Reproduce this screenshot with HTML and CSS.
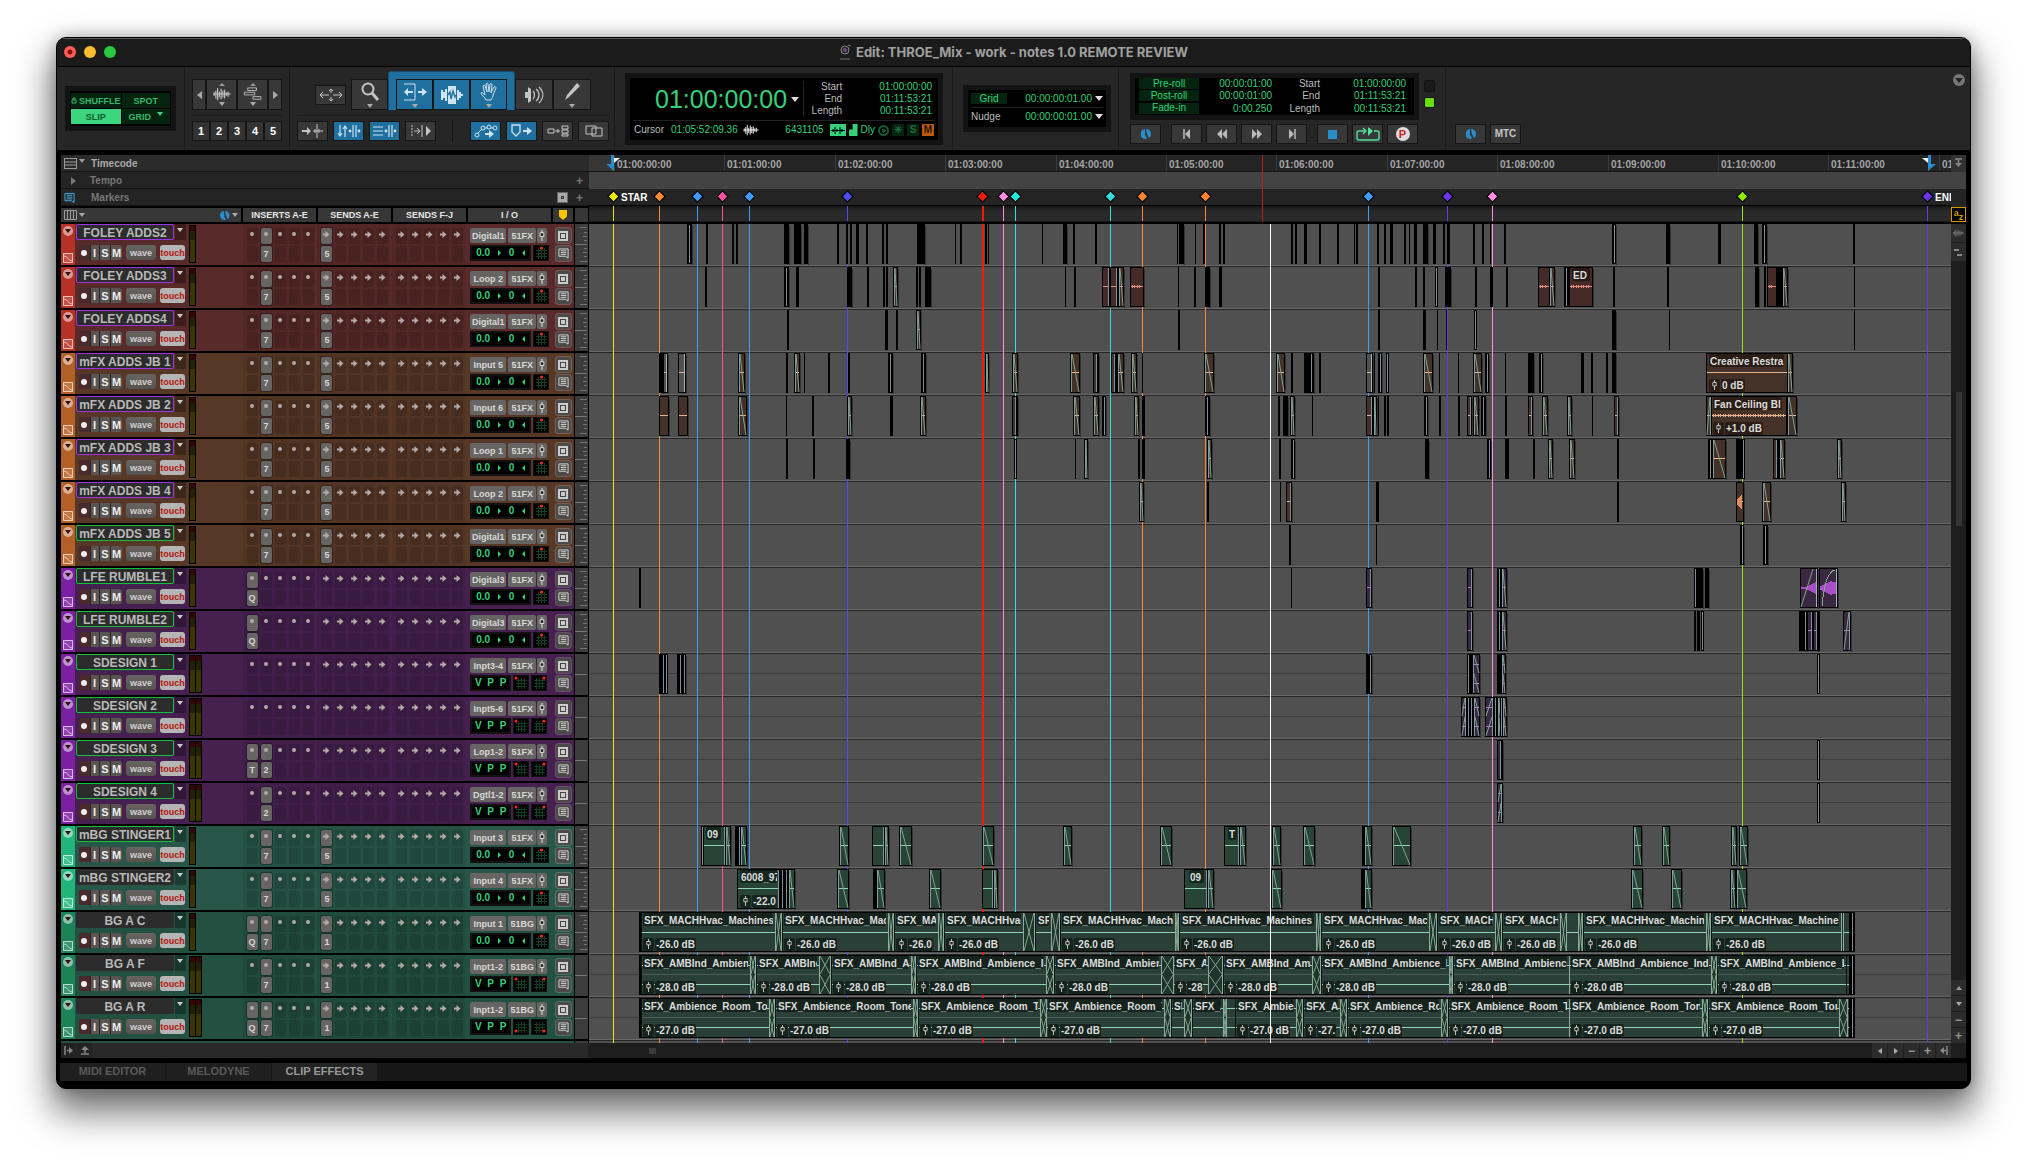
FILE: index.html
```html
<!DOCTYPE html>
<html lang="en">
<head>
<meta charset="utf-8">
<title>Edit: THROE_Mix - work - notes 1.0 REMOTE REVIEW</title>
<link rel="stylesheet" href="styles.css">
</head>
<body>
<svg class="defs" aria-hidden="true">
  <symbol id="wave" viewBox="0 0 20 16"><path d="M0 8h20M1 6v4M3 4v9M5 1v14M7 5v7M9 2v12M11 4v8M13 3v10M15 6v4M17 5v6" stroke="currentColor" stroke-width="1.3" fill="none"/></symbol>
  <symbol id="bars" viewBox="0 0 20 16"><path d="M4 1h10v3H4zM0 6h12v3H0zM10 11h9v3h-9z" stroke="currentColor" fill="none"/></symbol>
  <symbol id="arrows" viewBox="0 0 24 14"><path d="M1 7h9M14 7h9M4 4L1 7l3 3M20 4l3 3-3 3M12 1v4M12 9v4M10 3l2-2 2 2M10 11l2 2 2-2" stroke="currentColor" fill="none"/></symbol>
  <symbol id="lens" viewBox="0 0 20 20"><circle cx="8" cy="7" r="5.5" stroke="currentColor" stroke-width="2" fill="none"/><path d="M12 11l6 7" stroke="currentColor" stroke-width="3"/></symbol>
  <symbol id="trim" viewBox="0 0 24 20"><path d="M1 2h11v16H1" stroke="currentColor" fill="none"/><path d="M1 10l4-4v3h5v2H5v3zM24 10l-5-4v3h-4v2h4v3z" fill="currentColor"/></symbol>
  <symbol id="select" viewBox="0 0 22 20"><path d="M7 1h8v18H7z" fill="currentColor"/><path d="M1 5v10M3 7v6M5 4v12M17 5v10M19 7v6M21 9v2" stroke="currentColor" stroke-width="2"/><path d="M7 10l2-3 1 7 2-8 2 6 1-2" stroke="#1f6f9f" stroke-width="1.4" fill="none"/></symbol>
  <symbol id="hand" viewBox="0 0 18 20"><path d="M6 18c-1-3-5-5-5-7 1-1 2 0 4 2L3 4c1-1 2-1 2 0l2 6-1-8c1-1 2-1 2 0l1 8 1-8c1-1 2 0 2 1l-1 8 3-6c1-1 2 0 2 1l-3 7c0 2-1 3-2 5z" stroke="currentColor" fill="none"/></symbol>
  <symbol id="speaker" viewBox="0 0 20 20"><path d="M1 7h3V2l3 2v12l-3 2v-5H1z" fill="currentColor"/><path d="M9 6c2 2 2 6 0 8M12 4c4 3 4 9 0 12M15 2c5 5 5 11 0 16" stroke="currentColor" fill="none" stroke-width="1.3"/></symbol>
  <symbol id="pencil" viewBox="0 0 18 20"><path d="M2 18l2-5L14 1l3 3L6 15z" fill="currentColor"/></symbol>
  <symbol id="tabtr" viewBox="0 0 22 14"><path d="M0 6h5V3l4 4-4 4V8H0z" fill="currentColor"/><path d="M11 7h10M15 0v14M13 5v4M17 5v4" stroke="currentColor"/></symbol>
  <symbol id="link1" viewBox="0 0 24 14"><path d="M3 1v11M1 9l2 3 2-3M8 13V2M6 5l2-3 2 3M16 1v12M19 1v12" stroke="currentColor" fill="none" stroke-width="1.2"/><circle cx="13" cy="7" r="1.4" fill="currentColor"/><circle cx="22" cy="7" r="1.4" fill="currentColor"/></symbol>
  <symbol id="link2" viewBox="0 0 24 14"><path d="M0 3h10M0 7h10M0 11h10M16 1v12M19 1v12" stroke="currentColor" fill="none" stroke-width="1.2"/><circle cx="13" cy="7" r="1.4" fill="currentColor"/><circle cx="22" cy="7" r="1.4" fill="currentColor"/></symbol>
  <symbol id="insert" viewBox="0 0 20 14"><path d="M1 1v12" stroke="currentColor" stroke-dasharray="2 1"/><path d="M3 7h5M6 4l3 3-3 3M11 1v12" stroke="currentColor" fill="none"/><path d="M15 2l5 5-5 5z" fill="currentColor"/></symbol>
  <symbol id="auto" viewBox="0 0 24 14"><path d="M3 10l6-6 6 0 6 0" stroke="currentColor" fill="none"/><g fill="#1f6f9f" stroke="currentColor"><circle cx="3" cy="11" r="2"/><circle cx="9" cy="4" r="2"/><circle cx="15" cy="3" r="2"/><circle cx="21" cy="4" r="2"/></g><path d="M11 9h4V6l5 4-5 4v-3h-4z" fill="currentColor"/></symbol>
  <symbol id="mkarrow" viewBox="0 0 22 14"><path d="M1 1h8v7l-4 4-4-4z" stroke="currentColor" fill="none" stroke-width="1.3"/><path d="M12 6h4V3l5 4-5 4V8h-4z" fill="currentColor"/></symbol>
  <symbol id="expand" viewBox="0 0 22 12"><path d="M1 4h6v4H1zM8 6h5M11 4v4M15 1h6v3h-6zM15 5h6v3h-6zM15 9h6v2h-6z" stroke="currentColor" fill="none"/></symbol>
  <symbol id="layer" viewBox="0 0 18 12"><path d="M1 1h10v8H1zM7 3h10v8H7z" stroke="currentColor" fill="none"/></symbol>
  <symbol id="clock" viewBox="0 0 10 12"><path d="M4 1a5 5 0 0 0 1 10l1-1-2-3zM5 1c3 0 5 2 5 5 0 2-1 3-2 4L6 6z" fill="#2a8cc9"/></symbol>
  <symbol id="fader" viewBox="0 0 6 12"><path d="M3 0v12" stroke="currentColor"/><path d="M1 3h4v4H1z" stroke="currentColor" fill="#222"/></symbol>
  <symbol id="note" viewBox="0 0 12 12"><path d="M1 1h10v10L8 9H1z" stroke="currentColor" fill="none"/><path d="M3 3h6M3 5h6M3 7h6" stroke="currentColor"/></symbol>
</svg>
<main class="window">
  <header class="titlebar">
    <div class="lights"><button class="l-red" aria-label="Close"></button><button class="l-yel" aria-label="Minimize"></button><button class="l-grn" aria-label="Zoom"></button></div>
    <h1><svg width="12" height="16" viewBox="0 0 12 16"><circle cx="6" cy="6" r="4" fill="#222" stroke="#888"/><circle cx="6" cy="6" r="2" fill="#6b4a85"/><path d="M9 1l3 1M1 15h10" stroke="#777"/></svg>Edit: THROE_Mix - work - notes 1.0 REMOTE REVIEW</h1>
  </header>

  <section class="toolbar">
    <div class="grp g-mode">
      <div class="lcd modes">
        <button><svg width="6" height="7" viewBox="0 0 6 7"><path d="M1 3h4v3H1zM2 3V1h2v2" stroke="currentColor" fill="none"/></svg>SHUFFLE</button><button>SPOT</button><button class="on">SLIP</button><button>GRID<i class="tri"></i></button>
      </div>
    </div>
    <div class="grp g-zoom">
      <div class="btnrow tall"><button class="w13" aria-label="Zoom out"><i class="tl"></i></button><button class="w31" aria-label="Audio zoom"><i class="tu"></i><svg width="20" height="14"><use href="#wave"/></svg><i class="tri sm"></i></button><button class="w31" aria-label="MIDI zoom"><i class="tu"></i><svg width="20" height="14"><use href="#bars"/></svg><i class="tri sm"></i></button><button class="w13" aria-label="Zoom in"><i class="tr"></i></button></div>
      <hr>
      <div class="btnrow nums"><button>1</button><button>2</button><button>3</button><button>4</button><button>5</button></div>
    </div>
    <div class="grp g-tools">
      <div class="btnrow tools">
        <button class="w31 low" aria-label="Zoom toggle"><svg width="24" height="14"><use href="#arrows"/></svg></button>
        <button class="w37" aria-label="Zoomer"><svg width="20" height="20"><use href="#lens"/></svg><i class="tri sm"></i></button>
        <div class="smart"><button class="w37" aria-label="Trim"><svg width="24" height="20"><use href="#trim"/></svg><i class="tri sm"></i></button><button class="w37" aria-label="Selector"><svg width="22" height="20"><use href="#select"/></svg></button><button class="w37" aria-label="Grabber"><svg width="18" height="20"><use href="#hand"/></svg><i class="tri sm"></i></button></div>
        <button class="w38" aria-label="Scrubber"><svg width="20" height="20"><use href="#speaker"/></svg></button><button class="w38" aria-label="Pencil"><svg width="18" height="20"><use href="#pencil"/></svg><i class="tri sm"></i></button>
      </div>
      <hr>
      <div class="btnrow opts">
        <button aria-label="Tab to transient"><svg width="22" height="14"><use href="#tabtr"/></svg></button><button class="blue" aria-label="Link timeline"><svg width="24" height="14"><use href="#link1"/></svg></button><button class="blue" aria-label="Link track"><svg width="24" height="14"><use href="#link2"/></svg></button><button aria-label="Insertion follows playback"><svg width="20" height="14"><use href="#insert"/></svg></button>
        <span class="vr"></span>
        <button class="blue" aria-label="Automation follows edit"><svg width="24" height="14"><use href="#auto"/></svg></button><button class="blue" aria-label="Markers follow edit"><svg width="22" height="14"><use href="#mkarrow"/></svg></button><button aria-label="Mirrored editing"><svg width="22" height="12"><use href="#expand"/></svg></button><button aria-label="Layered editing"><svg width="18" height="12"><use href="#layer"/></svg></button>
      </div>
    </div>
    <div class="grp g-counter">
      <div class="lcd counter">
        <div class="c-top"><output class="big">01:00:00:00</output><i class="tri wh"></i>
          <dl><dt>Start</dt><dd>01:00:00:00</dd><dt>End</dt><dd>01:11:53:21</dd><dt>Length</dt><dd>00:11:53:21</dd></dl></div>
        <div class="c-bot"><span>Cursor</span><b>01:05:52:09.36</b><svg class="wh" width="16" height="12"><use href="#wave"/></svg><b class="num">6431105</b><span class="chip g"><svg width="14" height="9" viewBox="0 0 14 9"><path d="M0 4.500h14M2 3v3M4 1v7M6 3v3M9 1v7M11 3v3" stroke="currentColor"/></svg></span><span class="chip g sq"></span><b>Dly</b><span class="ring"></span><span class="chip d">✳</span><span class="chip d">S</span><span class="chip o">M</span></div>
      </div>
    </div>
    <div class="grp g-grid">
      <div class="lcd gridbox">
        <div><button class="tag">Grid</button><b>00:00:00:01.00</b><i class="tri wh"></i></div>
        <div><span>Nudge</span><b>00:00:00:01.00</b><i class="tri wh"></i></div>
      </div>
    </div>
    <div class="grp g-trans">
      <div class="tr-top">
        <div class="lcd roll">
          <button class="tag">Pre-roll</button><b>00:00:01:00</b><span>Start</span><b>01:00:00:00</b>
          <button class="tag">Post-roll</button><b>00:00:01:00</b><span>End</span><b>01:11:53:21</b>
          <button class="tag">Fade-in</button><b>0:00.250</b><span>Length</span><b>00:11:53:21</b>
        </div>
        <div class="leds"><i></i><i class="lit"></i></div>
      </div>
      <div class="btnrow play">
        <button class="gap" aria-label="Online"><svg width="10" height="12"><use href="#clock"/></svg></button><button aria-label="Return to zero"><svg width="10" height="10" viewBox="0 0 10 10"><path d="M2 0v10" stroke="#bbb" stroke-width="1.5"/><path d="M8 0L3 5l5 5z" fill="#bbb"/></svg></button><button aria-label="Rewind"><svg width="12" height="10" viewBox="0 0 12 10"><path d="M6 0L1 5l5 5zM11 0L6 5l5 5z" fill="#bbb"/></svg></button><button aria-label="Fast forward"><svg width="12" height="10" viewBox="0 0 12 10"><path d="M1 0l5 5-5 5zM6 0l5 5-5 5z" fill="#bbb"/></svg></button><button class="gap" aria-label="Go to end"><svg width="10" height="10" viewBox="0 0 10 10"><path d="M8 0v10" stroke="#bbb" stroke-width="1.5"/><path d="M2 0l5 5-5 5z" fill="#bbb"/></svg></button><button aria-label="Stop"><i class="stop"></i></button><button aria-label="Loop play"><svg width="24" height="14" viewBox="0 0 24 14"><path d="M4 4H3q-2 0-2 2v5q0 2 2 2h18q2 0 2-2V6q0-2-2-2h-3M4 4h5M7 1l3 3-3 3" stroke="#4fe39a" stroke-width="1.4" fill="none"/><path d="M12 0l5 4-5 5z" fill="#4fe39a"/></svg></button><button aria-label="Punch"><i class="punch">P</i></button>
      </div>
    </div>
    <div class="grp g-mtc"><div class="btnrow play"><button aria-label="Sync"><svg width="10" height="12"><use href="#clock"/></svg></button><button>MTC</button></div></div>
    <button class="circ" aria-label="Toolbar menu"><i class="tri dk"></i></button>
  </section>

  <section class="edit">
    <div class="top">
      <div class="lefthead">
        <div class="rl"><svg width="13" height="11" viewBox="0 0 13 11"><path d="M0 .5h13M0 4h13M0 7h13M0 10.500h13M.5 0v11M12.500 0v11" stroke="#999"/></svg><i class="tri sm"></i><span class="lt">Timecode</span></div>
        <div class="rl dim"><i class="tr"></i><span>Tempo</span><em>+</em></div>
        <div class="rl dim"><svg class="mk" width="11" height="12"><use href="#note"/></svg><span>Markers</span><i class="box"></i><em>+</em></div>
        <div class="cols">
          <div class="c0"><svg width="13" height="10" viewBox="0 0 13 10"><path d="M.5.5h12v9H.5zM3.500 0v10M6.500 0v10M9.500 0v10" stroke="#999" fill="none"/></svg><i class="tri sm"></i><svg class="ck" width="10" height="11"><use href="#clock"/></svg><i class="tri sm"></i></div><div class="c1">INSERTS A-E</div><div class="c1">SENDS A-E</div><div class="c1">SENDS F-J</div><div class="c2">I / O</div><div class="c3"><i class="shield"></i></div><div class="c4"></div>
        </div>
      </div>
      <div class="rulers">
        <div class="ruler" id="ruler"></div>
        <div class="tempo"></div>
        <div class="marks" id="marks"></div>
        <div class="band" id="band"></div>
      </div>
      <div class="rstrip"><span class="r1"><svg width="9" height="10" viewBox="0 0 9 10"><path d="M1 1h7M4.500 2v5" stroke="#888" stroke-width="1.500"/><path d="M1 5h7l-3.500 4z" fill="#888"/></svg></span><span class="r2"></span><span class="r3"></span><button class="az"><b>a</b><b>z</b></button></div>
    </div>
    <div class="mid">
      <div class="tracks" id="tracks"></div>
      <div class="vscroll"><button aria-label="Waveform"><svg width="11" height="12"><use href="#wave"/></svg></button><button aria-label="Blocks"><svg width="9" height="9" viewBox="0 0 9 9"><path d="M0 2h5M3 7h5" stroke="#888" stroke-width="2"/></svg></button><div class="vt"><i></i></div><button class="s" aria-label="Scroll up"><i class="tu"></i></button><button class="s" aria-label="Scroll down"><i class="tri sm"></i></button><button class="s">−</button><button class="s">+</button></div>
    </div>
    <div class="foot">
      <div class="fl"><button aria-label="Show lists"><svg width="10" height="9" viewBox="0 0 10 9"><path d="M1 0v9M3 4.500h4" stroke="#888" stroke-width="1.500"/><path d="M5 1l4 3.500L5 8z" fill="#888"/></svg></button><button aria-label="Eject"><svg width="10" height="9" viewBox="0 0 10 9"><path d="M1 8h8M5 3v4" stroke="#888" stroke-width="1.500"/><path d="M1 4l4-4 4 4z" fill="#888"/></svg></button></div>
      <div class="hs"><i></i><div class="hb"><button aria-label="Scroll left"><i class="tl"></i></button><button aria-label="Scroll right"><i class="tr"></i></button><button>−</button><button>+</button><button aria-label="Zoom to end"><svg width="9" height="9" viewBox="0 0 9 9"><path d="M8 0v9M2 4.500h5" stroke="#888" stroke-width="1.500"/><path d="M5 1L1 4.500 5 8z" fill="#888"/></svg></button></div></div>
    </div>
  </section>
  <nav class="tabs"><button>MIDI EDITOR</button><button>MELODYNE</button><button class="on">CLIP EFFECTS</button></nav>
</main>
<script src="app.js"></script>
</body>
</html>
```
FILE: styles.css
```css
* { box-sizing: border-box; }
body { margin: 0; padding: 37px 56px; min-height: 100vh; background: #fff; font: bold 10px/12px "Liberation Sans", Arial, sans-serif; color: #bdbdbd; }
button { font: inherit; color: inherit; border: 0; padding: 0; margin: 0; background: none; display: flex; align-items: center; justify-content: center; }
svg, i { display: block; flex: none; }
i { font-style: normal; }
.defs { position: absolute; width: 0; height: 0; }
.window { min-width: 1560px; background: #000; border-radius: 10px; border: 1px solid #000; box-shadow: inset 0 1px 0 #555, 0 20px 36px 4px rgba(0,0,0,.55), 0 0 16px rgba(0,0,0,.25); overflow: hidden; }

.tri { width: 0; height: 0; border: 4px solid transparent; border-top: 5px solid #aaa; border-bottom: 0; }
.tri.sm { border-width: 4px 3px 0; }
.tri.wh { border-top-color: #ddd; }
.tri.dk { border-top-color: #222; }
.tu { border: 3px solid transparent; border-bottom: 4px solid #999; border-top: 0; }
.tl { border: 4px solid transparent; border-right: 5px solid #aaa; border-left: 0; }
.tr { border: 4px solid transparent; border-left: 5px solid #aaa; border-right: 0; }

.titlebar { height: 28px; margin-bottom: 1px; padding-bottom: 1px; background: #1b1b1b; border-top: 1px solid #5a5a5a; display: grid; grid-template-columns: 1fr auto 1fr; align-items: center; }
.lights { display: flex; gap: 8px; padding-left: 7px; }
.lights button { width: 12px; height: 12px; border-radius: 50%; }
.l-red { background: radial-gradient(#8c0a06 0 2px, #ff5f57 3px); }
.l-yel { background: #febc2e; }
.l-grn { background: #28c840; }
h1 { margin: 0; display: flex; gap: 5px; align-items: center; font: 700 13px/16px Inter, sans-serif; color: #a0a0a0; }

.toolbar { position: relative; height: 83px; background: #262626; display: flex; }
.grp { border-right: 1px solid #1a1a1a; flex: none; }
.grp hr { width: 100%; height: 1px; border: 0; background: #1a1a1a; margin: 5px 0; }
.lcd { background: #000; border: 5px solid #131313; color: #bbb; font-weight: normal; }
.lcd b { font-weight: normal; color: #35d07a; }
.btnrow { display: flex; align-items: center; }
.btnrow button { background: #383838; border: 1px solid #151515; height: 20px; color: #c4c4c4; }
.btnrow .w13 { width: 14px; } .btnrow .w31 { width: 31px; } .btnrow .w37 { width: 37px; } .btnrow .w38 { width: 38px; }
.g-mode { width: 128px; padding: 19px 8px; }
.modes { width: 111px; height: 45px; display: grid; grid-template-columns: 1fr 1fr; grid-template-rows: 1fr 1fr; gap: 1px; padding: 2px 1px; font: bold 9px/12px "Liberation Sans", sans-serif; }
.modes button { background: #04240f; color: #35b86a; gap: 2px; }
.modes .on { background: #3bd67d; color: #0a5a2c; }
.modes .tri { border-top-color: #3bd67d; margin: -6px 0 0 4px; border-width: 4px 3px 0; }
.g-zoom { width: 105px; padding: 12px 7px; }
.tall button { height: 31px; flex-direction: column; gap: 1px; }
.tall .tu { border-width: 0 3px 3px; }
.nums button { flex: 1; color: #fff; font-size: 11px; background: #333; }
.g-tools { width: 325px; padding: 4px 5px 0 7px; }
.tools { height: 39px; align-items: flex-end; padding-left: 18px; }
.tools button { height: 31px; flex-direction: column; gap: 2px; }
.tools .low { height: 20px; margin: 0 5px 5px 0; }
.smart { display: flex; height: 39px; padding: 7px 7px 0; background: #1f6f9f; border-radius: 3px 3px 0 0; border: 1px solid #174f72; border-bottom: 0; }
.smart button { background: #1f6f9f; color: #cfe3f0; }
.opts { gap: 5px; }
.opts button { width: 31px; }
.opts .blue { background: #1f6f9f; color: #cfe3f0; }
.opts .vr { width: 1px; height: 22px; background: #151515; margin: -1px 12px -1px 11px; }
.g-counter { width: 338px; padding: 6px 10px; }
.counter { width: 318px; height: 72px; }
.c-top { display: flex; height: 43px; align-items: center; margin: 0 3px; border-bottom: 1px solid #222; }
.big { font: 25px/30px "Liberation Sans", sans-serif; color: #35d07a; margin: 0 4px 0 22px; }
dl { margin: 0 0 0 auto; padding-right: 3px; border-left: 1px solid #222; display: grid; grid-template-columns: 38px 1fr; column-gap: 37px; text-align: right; line-height: 12px; }
dt, dd { margin: 0; } dd { color: #35d07a; }
.c-bot { display: flex; align-items: center; gap: 3px; padding: 1px 4px; height: 18px; }
.c-bot > b:nth-of-type(1) { margin-left: 4px; }
.c-bot > svg { margin-left: 2px; color: #eee; }
.c-bot .num { margin: 0 3px 0 auto; }
.chip { width: 12px; height: 12px; display: flex; align-items: center; justify-content: center; font-weight: bold; }
.chip.g { background: #35d07a; color: #000; width: 16px; } .chip.sq { width: 9px; clip-path: polygon(45% 0, 100% 0, 100% 100%, 0 100%, 0 45%, 45% 45%); }
.chip.d { background: #04240f; color: #1d6b3c; } .chip.o { background: #b85a0c; color: #2a1200; }
.ring { width: 11px; height: 11px; border: 2px solid #125c30; border-radius: 50%; background: radial-gradient(#125c30 0 2px, #000 2px); }
.g-grid { width: 166px; padding: 18px 10px; }
.gridbox { width: 148px; height: 47px; padding: 0 3px; }
.gridbox div { display: flex; align-items: center; height: 17px; }
.gridbox div + div { border-top: 1px solid #222; height: 18px; }
.gridbox b { margin-left: auto; margin-right: 3px; font-size: 10px; }
.tag { background: #04240f; color: #35d07a; height: 11px; width: 36px; }
.g-trans { width: 327px; padding: 6px 11px; }
.tr-top { display: flex; gap: 5px; }
.roll { width: 290px; height: 47px; display: grid; grid-template-columns: 60px 77px 44px 90px; padding: 0 4px; text-align: right; line-height: 12px; }
.roll .tag { width: 60px; margin-bottom: 1px; }
.roll b { padding-right: 4px; }
.leds { display: grid; gap: 5px; padding-top: 7px; align-content: start; }
.leds i { width: 11px; height: 12px; background: #1a1a1a; border: 1px solid #111; border-radius: 2px; }
.leds .lit { background: #63e005; height: 11px; }
.play { gap: 4px; margin-top: 4px; }
.play button { width: 31px; }
.play .gap { margin-right: 6px; }
.stop { width: 9px; height: 9px; background: #2a8cc9; }
.punch { width: 14px; height: 14px; border-radius: 50%; background: #ddd; color: #c91f1f; font-size: 11px; line-height: 14px; }
.g-mtc { border: 0; padding: 53px 9px; }
.circ { width: 12px; height: 12px; border-radius: 50%; background: #777; margin: 7px 5px 0 auto; }

.edit { border-top: 5px solid #000; padding: 0 4px; }
.top, .mid, .foot { display: flex; }
.lefthead { width: 528px; flex: none; background: #242424; display: grid; grid-template-rows: 17px 17px 17px 16px; }
.rl { display: flex; align-items: center; padding: 1px 3px 0; background: #2b2b2b; gap: 2px; color: #aaa; border-bottom: 1px solid #151515; }
.rl span { margin-left: 4px; }
.rl .tri { margin-bottom: 6px; border-top-color: #999; }
.rl em { font: bold 12px/12px "Liberation Sans", sans-serif; width: 10px; }
.dim { color: #777; background: #242424; }
.dim .tr { margin: 0 7px 0 7px; border-left-color: #777; } .dim span { margin-right: auto; margin-left: 5px; }
.dim .mk { color: #4ab1f0; margin-right: 9px; }
.dim .box { margin-right: 7px; }
.box { width: 9px; height: 9px; border: 3px solid #aaa; background: #aaa; box-shadow: inset 0 0 0 1px #333; outline: 1px solid #666; }
.cols { background: #000; display: flex; gap: 2px; padding: 2px 1px 0 0; text-align: center; font-size: 9px; line-height: 15px; color: #e6e6e6; }
.cols div { background: #373737; height: 14px; }
.cols .c0 { width: 180px; display: flex; align-items: center; gap: 2px; padding: 0 3px; }
.c0 .ck { margin-left: auto; }
.c1 { width: 73px; } .c2 { width: 83px; }
.c3 { width: 20px; display: flex; align-items: center; justify-content: center; } .c4 { flex: 1; }
.shield { width: 8px; height: 10px; background: #ffc400; clip-path: polygon(0 0, 100% 0, 100% 65%, 50% 100%, 0 65%); }
.rulers { flex: 1; min-width: 0; display: grid; grid-template-rows: 17px 17px 17px 16px; position: relative; }
.ruler, .marks, .band { position: relative; overflow: hidden; }
.ruler { background: linear-gradient(90deg, #363636 24px, #242424 24px); border-bottom: 1px solid #151515; color: #a5a5a5; line-height: 19px; }
.tempo { background: #434343; }
.marks { background: #242424; color: #fff; line-height: 17px; border-bottom: 1px solid #000; }
.band { background: linear-gradient(#161616, #2a2a2a 5px); border-bottom: 1px solid #181818; }
.tick { position: absolute; top: 0; bottom: 0; padding-left: 2px; border-left: 1px solid #3a3a3a; }
.dia { position: absolute; top: 4px; width: 7px; height: 7px; margin-left: -3px; transform: rotate(45deg); outline: 1px solid #000; }
.mname { position: absolute; top: 0; white-space: nowrap; }
.line { position: absolute; top: 0; bottom: 0; width: 1px; }
.line.th { width: 2px; }
.flag { position: absolute; top: 0; }
.edline { position: absolute; top: 0; bottom: 0; width: 1px; background: #b5200f; }
.rstrip { width: 15px; flex: none; display: grid; grid-template-rows: 17px 17px 17px 16px; background: #242424; }
.r1 { background: #333; padding: 3px; } .r2 { background: #434343; }
.az { border: 1px solid #d79b00; background: #000; color: #d79b00; font-size: 9px; line-height: 8px; margin-top: 1px; }
.az b { margin-bottom: 4px; }
.az b + b { margin: 4px 0 0; }

.mid { position: relative; border-top: 2px solid #000; height: auto; }
.tracks { flex: 1; min-width: 0; position: relative; }
.over { position: absolute; left: 528px; right: 0; top: 0; bottom: 0; z-index: 1; pointer-events: none; }
.over.front { z-index: 4; }
.row { display: flex; height: 43px; }
.row.tail { height: 2px; overflow: hidden; }
.track { width: 513px; height: 41px; flex: none; display: flex; background: var(--bg); }
.strip { width: 14px; background: var(--strip); display: flex; flex-direction: column; align-items: center; justify-content: space-between; padding: 2px 0; }
.strip .cd { width: 10px; height: 10px; border-radius: 50%; background: rgba(255,255,255,.5); }
.cd .tri { border-top-color: #301010; border-width: 4px 3px 0; }
.strip svg { color: rgba(255,255,255,.65); background: rgba(255,255,255,.15); }
.nm { width: 113px; padding: 0 0 0 1px; }
.nrow { display: flex; gap: 1px; }
.nrow input { width: 98px; height: 16px; border: 1px solid #2c2c2c; background: #2c2c2c; color: #b9b9b9; font: bold 12px/14px "Liberation Sans", sans-serif; text-align: center; padding: 1px 0 0; border-radius: 2px; }
.nrow .p { border-color: #a232e6; } .nrow .g { border-color: #0fc13c; }
.nrow button { width: 11px; height: 16px; background: rgba(0,0,0,.3); }
.nrow .tri { border-width: 4px 3px 0; margin-bottom: 4px; border-top-color: #ccc; }
.brow { display: flex; padding: 5px 0 0 3px; gap: 4px; font-size: 9px; }
.brow button { height: 15px; border-radius: 3px; color: #d0d0d0; background: linear-gradient(#686462, #565250); }
.rism { display: flex; border-radius: 3px; overflow: hidden; width: 43px; gap: 1px; background: #2a2625; }
.rism button { border-radius: 0; flex: 1; color: #eee; font-size: 11px; background: #5a5553; }
.rism button:nth-child(2) { flex: none; width: 8px; }
.rism button:first-child { background: #4a2a2a; }
.rism button:first-child::after { content: ""; width: 6px; height: 6px; border-radius: 50%; background: #eee; }
.brow .wv { width: 30px; }
.brow .to { width: 25px; background: #b5b5b5; color: #b3130c; }
.meters { width: 53px; display: flex; padding: 1px 0 2px 1px; }
.meters i { width: 5px; background: linear-gradient(#350505 5px, #222200 5px 14px, #3b3500 14px); border: 1px solid #000; box-sizing: content-box; border-width: 1px 0 1px 1px; }
.meters i:last-child { border-right: 1px solid #000; }
.slots { width: 73px; margin-left: 2px; background: rgba(0,0,0,.06); display: grid; grid-template-columns: repeat(5, 11px); grid-template-rows: 16px 16px; gap: 2px 3px; padding: 4px 0 0 4px; }
.slots span { background: rgba(0,0,0,.12); border-radius: 2px; display: flex; align-items: center; justify-content: center; color: #d5d5d5; font-size: 9px; }
.slots span.on { background: #676563; box-shadow: 0 0 0 1px rgba(0,0,0,.3); }
.dot { width: 4px; height: 4px; border-radius: 50%; background: #b5a9a7; margin-bottom: 5px; }
.slots svg { margin-bottom: 4px; }
.io { width: 83px; margin-left: 2px; padding: 4px 0 0 3px; display: flex; flex-wrap: wrap; align-content: flex-start; gap: 2px 2px; }
.io button { height: 15px; border-radius: 2px; background: #676563; color: #d8d8d8; font-size: 9px; }
.io .a { width: 36px; } .io .b { width: 28px; } .io .c { width: 10px; margin-left: -1px; color: #eee; }
.io .v { height: 16px; background: #000; border: 2px solid #111; color: #35d07a; display: flex; align-items: center; justify-content: space-around; width: 61px; font-size: 10px; }
.io .v.st { width: 41px; }
.io .v i { border-width: 3px 0 3px 3px; border-left-color: #35d07a; }
.io .v i.tl { border-width: 3px 3px 3px 0; border-right-color: #35d07a; }
.io .gr { width: 16px; height: 16px; background: #000; border: 1px solid #111; }
.cm { width: 22px; margin-left: 2px; padding-top: 4px; display: grid; justify-items: center; align-content: start; gap: 3px; }
.cm button { width: 15px; height: 15px; border-radius: 2px; background: #4c4a49; color: #ddd; outline: 1px solid rgba(255,255,255,.2); }
.cm i { width: 10px; height: 10px; border: 2px solid #ccc; background: #ccc; box-shadow: inset 0 0 0 1px #444; }
.scale { width: 13px; margin-left: 1px; height: 41px; flex: none; background: #3c3c3c; }
.lane { flex: 1; margin-left: 1px; min-width: 0; position: relative; height: 43px; background: linear-gradient(#505050 41px, #686868 41px 42px, #262626 42px); }
.lane.st { background: linear-gradient(#505050 19px, #3e3e3e 19px 20px, #505050 20px 41px, #686868 41px 42px, #262626 42px); }
.lane > svg { position: absolute; inset: 0; width: 100%; height: 43px; z-index: 2; }
.clip { position: absolute; z-index: 3; top: 1px; height: 38px; overflow: hidden; color: #dcdcdc; white-space: nowrap; padding-left: 1px; }
.clip b { display: block; height: 13px; line-height: 15px; background: var(--lab); border-radius: 2px; padding-left: 1px; overflow: hidden; margin-right: 2px; }
.clip .gn { display: flex; gap: 1px; margin-top: 12px; }
.gn span { background: var(--lab); border-radius: 2px; padding: 0 1px; height: 13px; line-height: 13px; }
.gn .fd { width: 11px; flex: none; padding: 0 3px; }

.vscroll { width: 15px; background: #1e1e1e; display: flex; flex-direction: column; gap: 1px; }
.vscroll button { background: #2c2c2c; height: 18px; color: #777; }
.vscroll .s { height: 15px; color: #999; font-size: 12px; }
.vt { flex: 1; padding: 130px 4px 0 5px; }
.vt i { height: 134px; background: #333; }
.foot { height: 15px; }
.fl { width: 527px; flex: none; background: #292929; display: flex; gap: 1px; }
.fl button { width: 15px; background: #222; }
.hs { flex: 1; background: #1e1e1e; display: flex; align-items: center; padding-left: 61px; }
.hs > i { width: 7px; height: 6px; background: #3a3a3a; }
.hb { margin-left: auto; padding-right: 15px; display: flex; gap: 1px; background: #1e1e1e; }
.hb button { width: 15px; height: 15px; background: #2c2c2c; color: #999; font-size: 12px; }
.hb .tl { border-width: 3px 4px 3px 0; } .hb .tr { border-width: 3px 0 3px 4px; }
.tabs { display: flex; gap: 1px; margin: 5px 3px 7px; height: 18px; background: #171717; }
.tabs button { width: 105px; padding-bottom: 2px; background: #1f1f1f; color: #5a5a5a; font-size: 11px; }
.tabs .on { color: #999; background: #232323; }
```
FILE: app.js
```js
const W = 1362;
const pct = v => (v / W * 100) + '%';

const themes = {
  red: ['#582a29', '#b73226', '#452a28', '#e08f85', '#281816'],
  org: ['#573827', '#b45f25', '#443228', '#e8b48f', '#2a1d15'],
  pur: ['#46204f', '#7c20a3', '#3a2842', '#b070cc', '#20132a'],
  sea: ['#28574a', '#22b57b', '#274437', '#8fd4b4', '#14261e'],
  grn: ['#235040', '#1b8357', '#2a3f37', '#8fd4b4', '#15231c']
};

/* name, theme, outline, inserts, sends, input, output, stereo panner dots, shapes, labelled clips */
const tracks = [
  ['FOLEY ADDS2', 'red', 'p', '.7', '5', 'Digital1', '51FX', 0, 'c98,5 k117,2 k143,2 k147,2 k195,5 k205,7 k215,4 k248,2 k257,2 k261,2 k267,3 k277,2 k293,2 k297,2 k328,8 k366,1 k371,2 k396,2 k399,1 k453,1 k474,4 k484,2 k506,2 k588,1 k590,5 k606,1 k614,2 k630,2 k634,2 k702,2 k706,2 k715,3 k730,2 k748,2 k765,1 k767,2 k788,2 k795,2 k801,3 k815,2 k820,1 k825,3 k834,5 k844,3 k854,2 k858,3 k884,2 k893,2 k901,1 k915,2 c1023,4 k1077,4 k1129,3 k1165,4 c1173,5 k1264,2'],
  ['FOLEY ADDS3', 'red', 'p', '.7', '5', 'Loop 2', '51FX', 0, 'k116,2 c195,5 k207,3 k258,5 k278,2 k294,2 k297,2 d304,5 k327,2 k330,2 k336,6 k476,1 k485,2 f513,8 f521,8 d529,6 w541,14 k589,1 k605,2 k616,5 k630,3 k789,2 k826,2 k834,2 c846,3 k856,6 k886,2 k901,3 k917,2 w949,12 d960,6 c975,5 w980,24 k1024,2 k1078,2 k1166,4 k1175,2 w1178,10 k1188,5 d1193,6 k1265,1', [['ED', 982, 1003]]],
  ['FOLEY ADDS4', 'red', 'p', '.7', '5', 'Digital1', '51FX', 0, 'k198,2 k296,3 k307,2 d327,5 k589,2 k789,2 k834,3 k848,1 k857,1 c885,3 k1023,4 k1080,1 k1265,1'],
  ['mFX ADDS JB 1', 'org', 'p', '.7', '5', 'Input 5', '51FX', 0, 'k70,4 e74,5 e89,8 d149,7 k197,2 d205,6 k215,1 k239,2 k259,2 c299,5 c332,5 d396,4 d423,6 d481,10 c504,6 c522,6 d528,7 d542,6 k553,1 d615,10 d687,9 k702,2 k715,6 c720,5 k730,2 e777,7 k785,1 c789,4 c797,3 d834,10 k850,1 k869,1 d884,9 c896,4 k916,1 k939,6 c950,4 k992,3 k1002,2 k1017,2 k1023,4 f1117,82 d1198,6', [['Creative Restraint', 1119, 1197, '0 dB']]],
  ['mFX ADDS JB 2', 'org', 'p', '.7', '5', 'Input 6', '51FX', 0, 'g70,10 g89,10 d149,9 k197,1 k223,2 d258,5 k301,3 d331,6 c423,6 d484,7 d504,6 c513,4 d545,5 k553,3 c616,5 k689,2 k694,5 d701,5 k723,1 f777,7 d784,4 k789,1 k795,2 k798,2 c835,4 k850,2 k869,2 f878,5 d884,6 c892,5 k916,2 f939,5 d953,6 d978,5 k1003,1 f1025,5 u1117,6 w1122,76 d1198,10', [['Fan Ceiling Blades', 1123, 1195, '+1.0 dB']]],
  ['mFX ADDS JB 3', 'org', 'p', '.7', '5', 'Loop 1', '51FX', 0, 'k197,2 k224,2 k257,4 c425,3 k486,1 d495,4 k549,2 k553,3 d618,5 k690,2 c702,4 k836,4 c898,4 k916,1 k917,3 k944,2 d959,5 d980,6 k1028,2 c1119,5 d1123,14 k1147,8 c1153,3 c1184,6 d1190,6 d1248,5'],
  ['mFX ADDS JB 4', 'org', 'p', '.7', '5', 'Loop 2', '51FX', 0, 'd550,5 k618,2 k691,1 f697,6 k787,3 k1028,2 W1147,8 d1173,9 d1252,5'],
  ['mFX ADDS JB 5', 'org', 'g', '.7', '5', 'Digital1', '51FX', 0, 'k700,2 k787,1 c1151,4 c1174,5'],
  ['LFE RUMBLE1', 'pur', 'g', 'Q', '', 'Digital3', '51FX', 0, 'k50,2 k702,1 f777,6 f878,6 c908,5 d912,6 c1105,3 k1108,6 k1116,4 U1211,18 V1230,19'],
  ['LFE RUMBLE2', 'pur', 'g', 'Q', '', 'Digital3', '51FX', 0, 'f878,6 c908,5 d912,6 k1105,2 k1108,3 c1112,3 k1210,5 c1214,4 f1218,6 f1224,5 k1229,2 u1254,8'],
  ['SDESIGN 1', 'pur', 'g', '', '', 'Inpt3-4', '51FX', 'tt', 'k70,4 c73,3 c76,3 k88,2 c89,4 c93,4 k777,3 c779,4 c878,3 k881,3 d883,8 k908,4 d912,5 c1228,3'],
  ['SDESIGN 2', 'pur', 'g', '', '', 'Inpt5-6', '51FX', 'tt', 'u872,6 c877,4 c880,4 d884,7 u896,9 c904,4 d908,4 c911,3 d913,5'],
  ['SDESIGN 3', 'pur', 'g', 'T2', '', 'Lop1-2', '51FX', 'tt', 'c908,6 c1228,3'],
  ['SDESIGN 4', 'pur', 'g', '.2', '', 'Dgtl1-2', '51FX', 'tt', 'u908,6 c1228,3'],
  ['mBG STINGER1', 'sea', 'g', '.7', '5', 'Input 3', '51FX', 0, 'c112,3 f114,23 d136,6 k146,4 c149,3 d151,7 d250,10 f283,13 d295,5 d310,13 d393,12 d474,9 d571,12 f635,16 d650,7 d683,9 d714,12 k773,2 d775,8 d803,19 d1044,9 d1073,8 d1142,6 d1150,9', [['09', 116, 134], ['T', 638, 650]]],
  ['mBG STINGER2', 'sea', '', '.7', '5', 'Input 4', '51FX', 0, 'f148,43 c191,4 c195,4 d199,7 d248,12 k284,4 d287,9 d340,12 f393,12 d404,5 f595,24 d618,7 d682,11 k772,4 d775,8 d1042,12 d1082,11 d1141,6 d1147,11', [['6008_97', 150, 190, '-22.0'], ['09', 599, 617]]],
  ['BG A C', 'grn', '', 'Q7', '1', 'Input 1', '51BG', 0, 'x186,7 x299,6 x349,6 x434,12 x462,9 x586,4 x727,5 x840,8 x906,7 x971,7 x989,5 x1117,5 x1252,3', 'SFX_MACHHvac_Machines|-26.0 dB|53,186 194,299 306,349 356,434 447,462,1 472,586 591,727 733,840 849,906 914,971 995,1117 1123,1252'],
  ['BG A F', 'grn', '', '.7', '1', 'Inpt1-2', '51BG', 'tt', 'x161,6 x230,12 x322,5 x457,8 x572,13 x619,15 x723,9 x860,4 x980,1 x1122,6', 'SFX_AMBInd_Ambience_Industrial|-28.0 dB|53,161 168,230 243,322 328,457 466,572 585,619 635,723 733,860 865,980 981,1122 1129,1257'],
  ['BG A R', 'grn', '', 'Q7', '1', 'Inpt1-2', '51BG', 'bb', 'x180,6 x324,5 x451,7 x575,7 x595,8 x634,4 x707,7 x751,7 x852,7 x980,1 x1113,6 x1250,9', 'SFX_Ambience_Room_Tone|-27.0 dB|53,180 187,324 330,451 458,575 583,595,1 604,634,1 647,707 715,751 759,852 860,980 981,1113 1120,1250']
];

const markers = [[24, '#e6e60a', 'STAR'], [70, '#ff8a33'], [108, '#3f9bff'], [133, '#ff4fa0'], [160, '#3f9bff'], [258, '#4a4df0'], [393, '#ee1c0c', '', 1], [414, '#ff8ee0'], [426, '#25e8e0'], [521, '#35dcdc'], [553, '#ff8330'], [616, '#ff8330'], [779, '#3f9bff'], [858, '#6a35ee'], [903, '#ff8ee0'], [1153, '#8ee800'], [1338, '#6a35ee', 'END']];

const rect = (x, y, w, h, c) => `<rect x="${x}" y="${y}" width="${w}" height="${h}" fill="${c}"/>`;
const seg = (x1, y1, x2, y2, c) => `<path d="M${x1} ${y1}L${x2} ${y2}" stroke="${c}" fill="none" shape-rendering="auto"/>`;

function shape(s, fill, wave, stereo) {
  const k = s[0];
  const [x, w] = s.slice(1).split(',').map(Number);
  const mids = stereo ? [10, 29] : [19];
  if (k === 'x') {
    let o = rect(x, 1, w, 38, '#20332a') + rect(x, 1, 1, 38, '#8fa9a0') + rect(x + w - 1, 1, 1, 38, '#8fa9a0');
    const parts = stereo ? [[1, 19], [20, 39]] : [[1, 39]];
    if (w > 3) parts.forEach(([a, b]) => {
      o += seg(x + 1, a, x + w - 1, b, '#7fa68c') + seg(x + w - 1, a, x + 1, b, '#7fa68c');
    });
    return o;
  }
  let o = (w > 3 ? rect(x + w, 2, 1, 39, '#333') : '') + rect(x, 0, w, 40, '#000');
  if (k === 'k') return o;
  if (k === 'c') return o + (w > 5 ? rect(x + 1, 1, w - 3, 38, fill) : '') + rect(x + (w >> 1), 1, 1, 38, '#7d8f9d');
  o += rect(x + 1, 1, w - 2, 38, k === 'e' ? '#505050' : fill);
  mids.forEach(m => { o += rect(x + 1, m, w - 2, 1, wave); });
  if (k === 'e') o += rect(x + w - 2, 1, 1, 38, '#9fb0bd');
  if (k === 'd') o += rect(x + 1, 1, 1, 38, '#7d9aa0') + (stereo ? seg(x + 2, 1, x + w - 1, 19, '#7fa68c') + seg(x + 2, 20, x + w - 1, 39, '#7fa68c') : seg(x + 2, 1, x + w - 1, 39, '#7fa68c'));
  if (k === 'u') o += rect(x + w - 2, 1, 1, 38, '#7d9aa0') + (stereo ? seg(x + 1, 19, x + w - 2, 1, '#7fa68c') + seg(x + 1, 39, x + w - 2, 20, '#7fa68c') : seg(x + 1, 39, x + w - 2, 1, '#7fa68c'));
  if (k === 'f' && w < 60) o += rect(x + w - 2, 1, 1, 38, '#7d8f9d');
  if (k === 'w') for (let i = 2; i < w - 3; i++) { const h = i * 7 % 5 > 2 ? 1 : 0; o += rect(x + i, 19 - h, 1, 2 * h + 1, wave); }
  if (k === 'W') for (let i = 1; i < w - 2; i++) { const h = 2 + i; o += rect(x + i, 20 - h, 1, 2 * h, '#e09060'); }
  if (k === 'U' || k === 'V') {
    for (let i = 1; i < w - 2; i++) {
      const h = k === 'U' ? (i < 6 ? 1 : Math.round((i - 4) * .5)) : Math.round(i < w - 6 ? 1 + i * .5 : 6);
      o += rect(x + i, 20 - h, 1, 2 * h, '#a64fc6');
    }
    o += (k === 'U' ? seg(x + 1, 39, x + w - 5, 1, '#7fa68c') : `<path d="M${x + 3} 38Q${x + 6} 4 ${x + w - 3} 2" stroke="#7fa68c" fill="none"/>`) + rect(x + w - 2, 1, 1, 38, '#9fb0bd');
  }
  return o;
}

function clip(name, a, b, gain) {
  const text = name.slice(0, Math.ceil((b - a) / 5.2));
  return `<div class="clip" style="left:${pct(a)};width:${pct(b - a)}"><b>${text}</b>` +
    (gain ? `<div class="gn"><span class="fd"><svg width="5" height="12"><use href="#fader"/></svg></span><span>${gain}</span></div>` : '') + '</div>';
}

function lane(t) {
  const [, , fill, wave] = themes[t[1]];
  let svg = '', html = '';
  if (t[1] === 'grn') {
    const [name, gain, segs] = t[9].split('|');
    svg += rect(50, 0, 1216, 40, '#000') + rect(53, 1, 1207, 38, fill);
    (t[7] ? [10, 29] : [20]).forEach(m => { svg += rect(53, m, 1207, 1, wave); });
    if (t[7]) svg += rect(53, 19, 1207, 1, '#4e5f57');
    svg += rect(1263, 1, 1, 38, '#7d8f9d');
    segs.split(' ').forEach(s => {
      const [a, b, bare] = s.split(',').map(Number);
      svg += rect(a - 1, 1, 1, 38, '#0c1410') + rect(b, 1, 1, 38, '#0c1410');
      const fit = b - a < 35 ? gain.slice(0, 3) : b - a < 40 ? gain.slice(0, 4) : b - a < 55 ? gain.slice(0, 5) : gain;
      html += clip(name, a, b, bare ? '' : fit);
    });
  } else if (t[9]) t[9].forEach(c => { html += clip(...c); });
  svg += t[8].split(' ').map(s => shape(s, fill, wave, t[7])).join('');
  return `<div class="lane${t[7] ? ' st' : ''}"><svg viewBox="0 0 ${W} 43" preserveAspectRatio="none" shape-rendering="crispEdges">${svg}</svg>${html}</div>`;
}

const arrow = '<svg width="7" height="7" viewBox="0 0 7 7"><path d="M0 2.500h2.500V0L6.500 3.500 2.500 7V4.500H0z" fill="#b5a9a7"/></svg>';
function slots(vals, mark) {
  let o = '<div class="slots">';
  for (let i = 0; i < 5; i++) o += `<span class="${vals[i] && vals[i] !== '.' ? 'on' : ''}">${mark}</span>`;
  for (let i = 0; i < 5; i++) { const v = vals[i] && vals[i] !== '.' ? vals[i] : ''; o += `<span class="${v ? 'on' : ''}">${v}</span>`; }
  return o + '</div>';
}
function pan(x, y) {
  return `<div class="gr"><svg width="14" height="14" viewBox="0 0 14 14"><path d="M4.500 2v11M7.500 2v11M10.500 2v11M2 4.500h11M2 7.500h11M2 10.500h11" stroke="#123d22"/><circle cx="${x}" cy="${y}" r="1.500" fill="#ff2a10"/></svg></div>`;
}
function scale(stereo) {
  let p = '';
  if (stereo) p = 'M0 20.500h12';
  else [[4, 7], [9, 3], [13, 4], [17, 3], [21, 12], [25, 3], [29, 4], [33, 3], [38, 7]].forEach(([y, w]) => { p += `M${12 - w} ${y - .5}h${w}`; });
  return `<div class="scale"><svg width="13" height="41"><path d="${p}" stroke="#777"/></svg></div>`;
}
function row(t) {
  const th = themes[t[1]], st = t[7];
  const y = st === 'bb' ? 11 : 2;
  return `<div class="row" style="--bg:${th[0]};--strip:${th[1]};--lab:${th[4]}"><div class="track">
<div class="strip"><button class="cd" aria-label="Track view"><i class="tri"></i></button><svg width="10" height="10" viewBox="0 0 10 10"><path d="M.5.5h9v9h-9zM1 3c4 0 4 5 8 5" stroke="currentColor" fill="none"/></svg></div>
<div class="nm"><div class="nrow"><input class="${t[2]}" value="${t[0]}" aria-label="Track name"><button aria-label="Track menu"><i class="tri"></i></button></div>
<div class="brow"><div class="rism"><button aria-label="Record"></button><button>I</button><button>S</button><button>M</button></div><button class="wv">wave</button><button class="to">touch</button></div></div>
<div class="meters"><i></i>${st ? '<i></i>' : ''}</div>
${slots(t[3], '<i class="dot"></i>')}${slots(t[4], arrow)}${slots('', arrow)}
<div class="io"><button class="a">${t[5]}</button><button class="b">${t[6]}</button><button class="c" aria-label="Fader"><svg width="6" height="11"><use href="#fader"/></svg></button>
${st ? `<div class="v st"><span>V</span><span>P</span><span>P</span></div>${pan(2, y)}${pan(12, y)}` : `<div class="v"><span>0.0</span><i class="tr"></i><span>0</span><i class="tl"></i></div>${pan(7.5, 2)}`}</div>
<div class="cm"><button aria-label="Color"><i></i></button><button aria-label="Comments"><svg width="11" height="11"><use href="#note"/></svg></button></div>
</div>${scale(st)}${lane(t)}</div>`;
}

const lines = markers.map(m => `<i class="line${m[3] ? ' th' : ''}" style="left:${pct(m[0])};background:${m[1]}"></i>`).join('');
document.getElementById('tracks').innerHTML =
  tracks.map(row).join('') +
  '<div class="row tail" style="--bg:#235040"><div class="track"></div><div class="scale"></div><div class="lane"></div></div>' +
  `<div class="over">${lines}</div><div class="over front"><i class="line" style="left:${pct(681)};background:#fff"></i></div>`;
document.getElementById('band').innerHTML = lines;
document.getElementById('marks').innerHTML = markers.map(m =>
  `<i class="dia" style="left:${pct(m[0])};background:${m[1]}"></i>` + (m[2] ? `<span class="mname" style="left:${pct(m[0] + 8)}">${m[2]}</span>` : '')).join('');
let r = '';
for (let i = 0; i < 13; i++) {
  const x = i ? 25 + Math.round(i * 110.4) : 25;
  r += `<span class="tick" style="left:${pct(x)}">01:${i < 12 ? String(i).padStart(2, '0') + ':00:00' : ''}</span>`;
}
r += `<svg class="flag" style="left:${pct(16)}" width="16" height="16" viewBox="0 0 16 16"><path d="M6 0h3v16L1 9h5z" fill="#2a8cc9"/><path d="M9 3h6l-6 5z" fill="#eee"/></svg>`;
r += `<svg class="flag" style="left:${pct(1332)}" width="16" height="16" viewBox="0 0 16 16"><path d="M7 0h3v9h5l-8 7z" fill="#2a8cc9"/><path d="M7 3H1l6 5z" fill="#eee"/></svg>`;
document.getElementById('ruler').innerHTML = r;
document.querySelector('.rulers').insertAdjacentHTML('beforeend', `<i class="edline" style="left:${pct(673)}"></i>`);
```
